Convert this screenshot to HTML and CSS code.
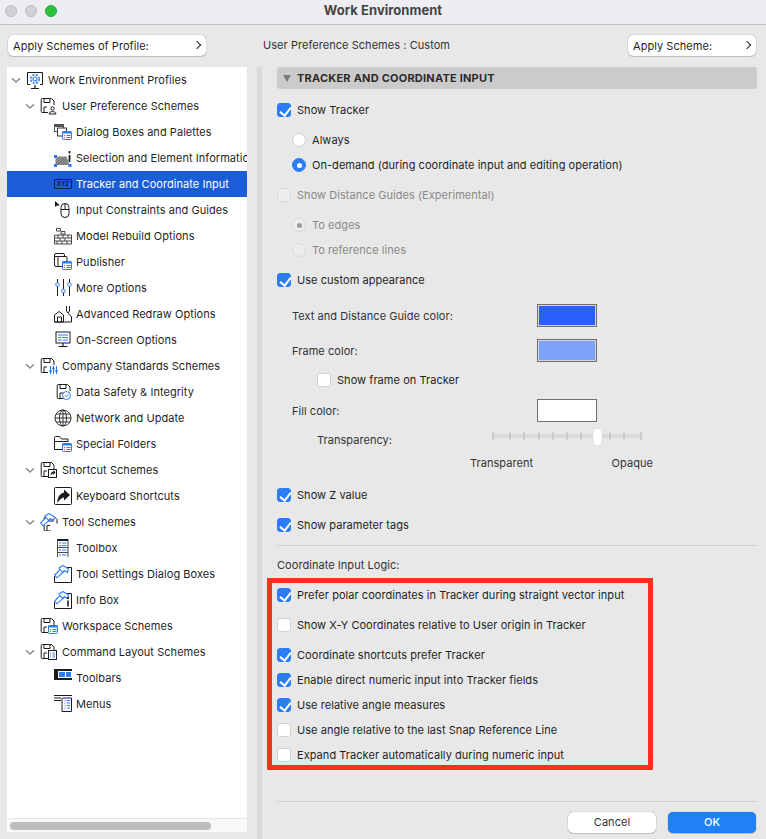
FILE: index.html
```html
<!DOCTYPE html>
<html lang="en">
<head>
    <meta charset="UTF-8">
    <meta name="viewport" content="width=device-width, initial-scale=1.0">
    <title>Work Environment</title>
    <link rel="stylesheet" href="styles.css">
</head>
<body>
    <!-- shared icon parts -->
    <svg class="defs" width="0" height="0">
        <defs>
            <symbol id="chev" viewBox="0 0 12 12"><path d="M2 4.200 6 8l4-3.800" fill="none" stroke="#8c8c8c" stroke-width="1.500"/></symbol>
            <pattern id="hatch" width="2" height="2" patternUnits="userSpaceOnUse" patternTransform="rotate(45)"><rect width="2" height="2" fill="#5c5c5c"/><rect width=".8" height="2" fill="#c4c4c4"/></pattern>
            <g id="floppy" fill="none" stroke="#1c1c1c"><path d="M8 15.500H2.200a1 1 0 0 1-1-1V2.500a1 1 0 0 1 1-1h9.300L14 4v4"/><path d="M4 1.500v4h6v-4M4 15.500V10h3"/></g>
            <g id="badge"><rect x="8.500" y="8.500" width="9" height="8" rx=".8" fill="#fff" stroke="#2f7bf5"/><rect x="8.500" y="8.500" width="9" height="2" fill="#2f7bf5"/><path d="M10 12.500h1M12.500 12.500h4M10 14.500h1M12.500 14.500h4" stroke="#2f7bf5"/></g>
            <g id="hammer" fill="#fff" stroke="#2f7bf5" stroke-width="1.100"><path d="M.7 10 7 3.500l3 3-7 6.300z"/><path d="M5 3 9 .5l5.500 3.500-1 3.500-3-2-2 2z"/></g>
        </defs>
    </svg>

    <div class="titlebar">
        <div class="lights">
            <span class="light"></span>
            <span class="light"></span>
            <span class="light green"></span>
        </div>
        <div class="title">Work Environment</div>
    </div>

    <div class="toprow">
        <div class="popup popup-left">Apply Schemes of Profile:</div>
        <div class="scheme-label">User Preference Schemes : Custom</div>
        <div class="popup popup-right">Apply Scheme:</div>
    </div>

    <div class="main">
        <div class="tree">
            <div class="tree-list">
                <div class="node lvl0"><svg class="chev"><use href="#chev"/></svg><svg class="ic" viewBox="0 0 18 18"><path d="M4 13.500H1.500v-12h15v12H14" fill="none" stroke="#1c1c1c"/><path d="M9 14v3M5 17.500h8" stroke="#1c1c1c" stroke-width="1.200"/><circle cx="9" cy="8" r="2" fill="none" stroke="#2f7bf5" stroke-width="1.200"/><circle cx="9" cy="8" r="4.300" fill="none" stroke="#2f7bf5" stroke-width="1.500" stroke-dasharray="2.200 1.200"/></svg>Work Environment Profiles</div>
                <div class="node lvl1"><svg class="chev"><use href="#chev"/></svg><svg class="ic" viewBox="0 0 18 18"><use href="#floppy"/><circle cx="12.500" cy="11.500" r="1.700" fill="none" stroke="#1c1c1c"/><path d="M9 17c0-3.200 7-3.200 7 0z" fill="none" stroke="#1c1c1c"/></svg>User Preference Schemes</div>
                <div class="node lvl2"><span class="chev"></span><svg class="ic" viewBox="0 0 18 18"><rect x=".5" y="1.500" width="9" height="7" fill="#fff" stroke="#555"/><path d="M.5 3h9" stroke="#555" stroke-width="2"/><rect x="3.500" y="5" width="9" height="8" fill="#fff" stroke="#333"/><use href="#badge"/></svg>Dialog Boxes and Palettes</div>
                <div class="node lvl2"><span class="chev"></span><svg class="ic" viewBox="0 0 18 18"><path d="M1.500 7.500h11l3 8.500h-14z" fill="url(#hatch)"/><rect y="6" width="3" height="3" fill="#2f7bf5"/><rect y="15" width="3" height="3" fill="#2f7bf5"/><rect x="14.500" y="15" width="3" height="3" fill="#2f7bf5"/><path d="M15.500 6v7M15.500 2v2.500" stroke="#1c1c1c" stroke-width="1.800"/></svg>Selection and Element Information</div>
                <div class="node lvl2 selected"><span class="chev"></span><svg class="ic" viewBox="0 0 18 18"><rect x=".5" y="4.500" width="17" height="9" rx=".5" fill="none" stroke="#14213d"/><text x="9" y="11.300" class="xyz">XYZ</text></svg>Tracker and Coordinate Input</div>
                <div class="node lvl2"><span class="chev"></span><svg class="ic" viewBox="0 0 18 18"><path d="M1 0v6l2-1.500h3z" fill="#1c1c1c"/><rect x="7" y="2.500" width="8" height="14" rx="4" fill="none" stroke="#1c1c1c"/><path d="M7 8.500h8M11 2.500v6" stroke="#1c1c1c"/></svg>Input Constraints and Guides</div>
                <div class="node lvl2"><span class="chev"></span><svg class="ic" viewBox="0 0 18 18"><path d="M2.500 1.500h4v2.500h-4zM7 4.500h4v2.500H7zM.5 8h17M.5 11h17M.5 14h17M.5 17h17M.5 8v9M17.500 8v9M4 8v3M9 8v3M14 8v3M6 11v3M11 11v3M3 14v3M8 14v3M13 14v3" fill="none" stroke="#333" stroke-width=".9"/></svg>Model Rebuild Options</div>
                <div class="node lvl2"><span class="chev"></span><svg class="ic" viewBox="0 0 18 18"><rect x=".5" y=".5" width="10" height="13" rx="1.500" fill="#fff" stroke="#1c1c1c"/><path d="M.5 3.500h10" stroke="#1c1c1c"/><rect x="4" y="3.500" width="9" height="10" rx="1" fill="#fff" stroke="#1c1c1c"/><use href="#badge"/></svg>Publisher</div>
                <div class="node lvl2"><span class="chev"></span><svg class="ic" viewBox="0 0 18 18"><path d="M3.500 0v17M9.500 0v17M15.500 0v17" stroke="#1c1c1c"/><circle cx="3.500" cy="5.500" r="1.800" fill="#fff" stroke="#2f7bf5"/><circle cx="9.500" cy="12" r="1.800" fill="#fff" stroke="#2f7bf5"/><circle cx="15.500" cy="5.500" r="1.800" fill="#fff" stroke="#2f7bf5"/></svg>More Options</div>
                <div class="node lvl2"><span class="chev"></span><svg class="ic" viewBox="0 0 18 18"><path d="M.5 17V10L5 6.500 9.500 10v7z" fill="none" stroke="#1c1c1c"/><path d="M.5 17h17v-5.500L14 8.500M3.500 17v-5h4v5" fill="none" stroke="#1c1c1c"/><path d="M12.500 1v5l1.500 2 1.500-2V1" fill="none" stroke="#1c1c1c"/></svg>Advanced Redraw Options</div>
                <div class="node lvl2"><span class="chev"></span><svg class="ic" viewBox="0 0 18 18"><rect x="2" y="1" width="14" height="11" fill="none" stroke="#1c1c1c"/><path d="M4 4h10M4 6.500h3M8 6.500h6M4 9h4M9 9h5" stroke="#2f7bf5"/><path d="M9 12v3M4.500 15.500h9" stroke="#1c1c1c" stroke-width="1.200"/></svg>On-Screen Options</div>
                <div class="node lvl1"><svg class="chev"><use href="#chev"/></svg><svg class="ic" viewBox="0 0 18 18"><use href="#floppy"/><path d="M10.500 9v8M13.500 9v8M16.500 9v8" stroke="#2f7bf5"/><circle cx="10.500" cy="14" r="1.300" fill="#2f7bf5"/><circle cx="13.500" cy="11.500" r="1.300" fill="#2f7bf5"/><circle cx="16.500" cy="14" r="1.300" fill="#2f7bf5"/></svg>Company Standards Schemes</div>
                <div class="node lvl2"><span class="chev"></span><svg class="ic" viewBox="0 0 18 18"><use href="#floppy" transform="translate(2)"/><circle cx="12.500" cy="12.500" r="4" fill="#fff" stroke="#2f7bf5"/><path d="M11 12.500l1.200 1.300 2-2.500" fill="none" stroke="#2f7bf5"/></svg>Data Safety &amp; Integrity</div>
                <div class="node lvl2"><span class="chev"></span><svg class="ic" viewBox="0 0 18 18"><g fill="none" stroke="#333"><circle cx="9" cy="9" r="8"/><ellipse cx="9" cy="9" rx="3.500" ry="8"/><path d="M9 1v16M1 9h16M2 5h14M2 13h14"/></g></svg>Network and Update</div>
                <div class="node lvl2"><span class="chev"></span><svg class="ic" viewBox="0 0 18 18"><path d="M8 14.500H.5v-12a1 1 0 0 1 1-1h4l2 2.500h6.500v3" fill="none" stroke="#1c1c1c"/><path d="M.5 6.500H14" stroke="#1c1c1c"/><use href="#badge"/></svg>Special Folders</div>
                <div class="node lvl1"><svg class="chev"><use href="#chev"/></svg><svg class="ic" viewBox="0 0 18 18"><use href="#floppy"/><rect x="8.500" y="8.500" width="8" height="8" fill="#fff" stroke="#1c1c1c"/><path d="M10.500 15c0-3 1.500-4.500 3-4.500V9l2 2.500-2 2.500v-1.500c-1 0-2 .8-3 2.500z" fill="#1c1c1c"/></svg>Shortcut Schemes</div>
                <div class="node lvl2"><span class="chev"></span><svg class="ic" viewBox="0 0 18 18"><rect x=".5" y=".5" width="17" height="17" rx="1" fill="none" stroke="#1c1c1c"/><path d="M3.500 16C3 10 6 6.500 10 5.500V2.500L16 8l-6 5.500V10.500C7.500 10.500 5 13 3.500 16z" fill="#1c1c1c"/></svg>Keyboard Shortcuts</div>
                <div class="node lvl1"><svg class="chev"><use href="#chev"/></svg><svg class="ic" viewBox="0 0 18 18"><use href="#floppy" transform="translate(3 2.500)"/><use href="#hammer"/></svg>Tool Schemes</div>
                <div class="node lvl2"><span class="chev"></span><svg class="ic" viewBox="0 0 18 18"><path d="M3.500 1h10.500" stroke="#1c1c1c" stroke-width="2"/><path d="M3.500 0v18M14 0v18M3.500 8.500h10.500M3.500 13.500h10.500" stroke="#1c1c1c" stroke-width=".8"/><path d="M5 4h2M8 4h4.500M5 6.500h2M8 6.500h4.500M5 11h2M8 11h4.500M5 16h2M8 16h4.500" stroke="#2f7bf5" stroke-width="1.200"/></svg>Toolbox</div>
                <div class="node lvl2"><span class="chev"></span><svg class="ic" viewBox="0 0 18 18"><path d="M.5 11v6.500h17V2.500H13" fill="none" stroke="#1c1c1c"/><use href="#hammer"/></svg>Tool Settings Dialog Boxes</div>
                <div class="node lvl2"><span class="chev"></span><svg class="ic" viewBox="0 0 18 18"><path d="M.5 11v6.500h17V2.500H13" fill="none" stroke="#1c1c1c"/><use href="#hammer"/><path d="M14 9.500v6M14 6v2" stroke="#1c1c1c" stroke-width="1.600"/></svg>Info Box</div>
                <div class="node lvl1"><span class="chev"></span><svg class="ic" viewBox="0 0 18 18"><use href="#floppy"/><use href="#badge"/></svg>Workspace Schemes</div>
                <div class="node lvl1"><svg class="chev"><use href="#chev"/></svg><svg class="ic" viewBox="0 0 18 18"><use href="#floppy"/><rect x="8.500" y="7.500" width="8" height="9" fill="#fff" stroke="#1c1c1c"/><path d="M10 10h1M12.500 10h2.500M10 12h1M12.500 12h2.500M10 14h1M12.500 14h2.500" stroke="#2f7bf5"/></svg>Command Layout Schemes</div>
                <div class="node lvl2"><span class="chev"></span><svg class="ic" viewBox="0 0 18 18"><rect y="0" width="18" height="11" fill="#1c1c1c"/><rect x="4" y="2" width="14" height="7" fill="#fff"/><rect x="5" y="3" width="6" height="5" fill="#2f7bf5"/><rect x="12" y="3" width="5" height="5" fill="#2f7bf5"/></svg>Toolbars</div>
                <div class="node lvl2"><span class="chev"></span><svg class="ic" viewBox="0 0 18 18"><path d="M0 .5h18M0 3h7M0 5.500h7" stroke="#1c1c1c"/><path d="M8 3v13.500h9.500V3h-9" fill="none" stroke="#1c1c1c"/><path d="M10.500 5.500h1M13 5.500h3M10.500 8h1M13 8h3M10.500 10.500h1M13 10.500h3M10.500 13h1M13 13h3" stroke="#2f7bf5"/></svg>Menus</div>
            </div>
            <div class="hscroll"><div class="hscroll-thumb"></div></div>
        </div>

        <div class="settings">
            <div class="section-head"><span class="tri"></span>TRACKER AND COORDINATE INPUT</div>

            <div class="row first"><span class="check on"></span>Show Tracker</div>
            <div class="row sub"><span class="radio"></span>Always</div>
            <div class="row sub tight"><span class="radio on"></span>On-demand (during coordinate input and editing operation)</div>

            <div class="row off"><span class="check"></span>Show Distance Guides (Experimental)</div>
            <div class="row sub off"><span class="radio dot"></span>To edges</div>
            <div class="row sub tight off"><span class="radio"></span>To reference lines</div>

            <div class="row"><span class="check on"></span>Use custom appearance</div>
            <div class="color-row text-color"><span class="color-label">Text and Distance Guide color:</span><span class="swatch blue"></span></div>
            <div class="color-row frame-color"><span class="color-label">Frame color:</span><span class="swatch light-blue"></span></div>
            <div class="row frame-check"><span class="check"></span>Show frame on Tracker</div>
            <div class="color-row fill-color"><span class="color-label">Fill color:</span><span class="swatch white"></span></div>
            <div class="slider-row">
                <span class="slider-label">Transparency:</span>
                <svg class="slider" width="152" height="20" viewBox="0 0 152 20">
                    <rect x="1" y="5" width="150" height="4" fill="#dadada"/>
                    <path d="M2 3v8M19 3v8M33 3v8M48 3v8M62 3v8M76 3v8M90 3v8M119 3v8M133 3v8M150 3v8" stroke="#bdbdbd" stroke-width="1.200"/>
                    <rect x="102" y="-.5" width="9" height="17" rx="4.500" fill="#fff" stroke="#d4d4d4" stroke-width=".5"/>
                </svg>
            </div>
            <div class="slider-ends"><span>Transparent</span><span>Opaque</span></div>

            <div class="row z-value"><span class="check on"></span>Show Z value</div>
            <div class="row"><span class="check on"></span>Show parameter tags</div>

            <div class="divider"></div>
            <div class="logic-label">Coordinate Input Logic:</div>

            <div class="highlight">
                <div class="row first-in"><span class="check on"></span>Prefer polar coordinates in Tracker during straight vector input</div>
                <div class="row"><span class="check"></span>Show X-Y Coordinates relative to User origin in Tracker</div>
                <div class="row"><span class="check on"></span>Coordinate shortcuts prefer Tracker</div>
                <div class="row tight"><span class="check on"></span>Enable direct numeric input into Tracker fields</div>
                <div class="row tight"><span class="check on"></span>Use relative angle measures</div>
                <div class="row tight"><span class="check"></span>Use angle relative to the last Snap Reference Line</div>
                <div class="row tight"><span class="check"></span>Expand Tracker automatically during numeric input</div>
            </div>

            <div class="divider bottom"></div>
            <div class="buttons">
                <div class="btn">Cancel</div>
                <div class="btn primary">OK</div>
            </div>
        </div>
    </div>
</body>
</html>
```

FILE: styles.css
```css
* {
    box-sizing: border-box;
}
html, body {
    height: 100%;
}
body {
    margin: 0;
    background: #e8e8e8;
    color: #1f1f1f;
    font-family: Inter, "Liberation Sans", sans-serif;
    font-size: 11px;
    letter-spacing: 0.05px;
    overflow: hidden;
    display: flex;
    flex-direction: column;
}
.defs {
    position: absolute;
}

/* title bar */
.titlebar {
    height: 25px;
    flex: none;
    display: grid;
    grid-template-columns: 1fr auto 1fr;
    align-items: center;
    background: #eeedf2;
    border-bottom: 1px solid #c2c2c2;
    padding-bottom: 5px;
}
.lights {
    display: flex;
    gap: 8px;
    padding-left: 5px;
    padding-top: 2px;
}
.light {
    width: 12px;
    height: 12px;
    border-radius: 50%;
    background: #d2d0d5;
    border: 1px solid #bdbbc0;
}
.light.green {
    background: #2cc23c;
    border-color: #25ad33;
}
.title {
    font-size: 13px;
    font-weight: 700;
    color: #444;
}

/* top row */
.toprow {
    height: 42px;
    flex: none;
    display: flex;
    align-items: center;
    padding: 0 10px 1px 8px;
}
.popup {
    height: 21px;
    background: #fff;
    border-radius: 5px;
    box-shadow: 0 0 1px rgba(0, 0, 0, 0.5), 0 1px 1px rgba(0, 0, 0, 0.15);
    line-height: 22px;
    padding-left: 5px;
    position: relative;
}
.popup::after {
    content: "";
    position: absolute;
    right: 6px;
    top: 7px;
    width: 5px;
    height: 5px;
    border-top: 1.5px solid #222;
    border-right: 1.5px solid #222;
    transform: rotate(45deg);
}
.popup-left {
    width: 198px;
}
.popup-right {
    width: 128px;
    margin-left: auto;
}
.scheme-label {
    margin-left: 57px;
    color: #333;
    padding-bottom: 2px;
}

.main {
    flex: 1;
    min-height: 0;
    display: flex;
    align-items: flex-start;
}

/* left tree */
.tree {
    width: 240px;
    height: 765px;
    margin-left: 7px;
    background: #fff;
    display: flex;
    flex-direction: column;
    overflow: hidden;
    flex: none;
}
.tree-list {
    flex: 1;
}
.node {
    height: 26px;
    display: flex;
    align-items: center;
    white-space: nowrap;
}
.node.lvl0 {
    padding-left: 3px;
}
.node.lvl1 {
    padding-left: 17px;
}
.node.lvl2 {
    padding-left: 31px;
}
.node.selected {
    background: #1b5cd7;
    color: #fff;
}
.chev {
    width: 12px;
    height: 12px;
    margin-right: 4px;
    flex: none;
}
.ic {
    width: 18px;
    height: 18px;
    margin-right: 4px;
    flex: none;
}
.xyz {
    font-size: 5.5px;
    font-weight: 700;
    text-anchor: middle;
    fill: #14213d;
}
.hscroll {
    height: 14px;
    flex: none;
    background: #f8f8f8;
    border-top: 1px solid #e6e6e6;
    padding: 3px 3px 0;
}
.hscroll-thumb {
    width: 201px;
    height: 8px;
    background: #bdbdbd;
    border-radius: 4px;
}

/* right side */
.settings {
    width: 505px;
    height: 772px;
    margin-left: 10px;
    padding: 0 5px 0 15px;
    border-left: 5px solid #d9d9d9;
}
.section-head {
    height: 22px;
    display: flex;
    align-items: center;
    background: #cbcbcb;
    border-radius: 3px;
    font-weight: 700;
    letter-spacing: 0.22px;
    color: #2b2b2b;
    padding-left: 6px;
}
.tri {
    width: 0;
    height: 0;
    border-left: 4px solid transparent;
    border-right: 4px solid transparent;
    border-top: 7px solid #7c7c7c;
    margin-right: 6px;
}
.row {
    height: 20px;
    margin-top: 10px;
    display: flex;
    align-items: center;
    white-space: nowrap;
}
.row.first {
    margin-top: 11px;
}
.row.tight {
    margin-top: 5px;
}
.row.sub {
    padding-left: 15px;
}
.row.off {
    color: #8a8a8a;
}
.check {
    width: 14px;
    height: 14px;
    margin-right: 6px;
    border-radius: 3px;
    background: #fff;
    border: 1px solid #d2d2d2;
    position: relative;
    flex: none;
}
.check.on {
    background: #2b7df6;
    border-color: #2b7df6;
}
.check.on::after {
    content: "";
    position: absolute;
    left: 3.5px;
    top: 0.5px;
    width: 5px;
    height: 9px;
    border-right: 2px solid #fff;
    border-bottom: 2px solid #fff;
    transform: rotate(38deg);
}
.row.off .check {
    background: #ededed;
    border-color: #d8d8d8;
}
.radio {
    width: 14px;
    height: 14px;
    margin-right: 6px;
    border-radius: 50%;
    background: #fff;
    border: 1px solid #cfcfcf;
    position: relative;
    flex: none;
}
.radio.on {
    background: #2b7df6;
    border-color: #2b7df6;
}
.radio.on::after, .radio.dot::after {
    content: "";
    position: absolute;
    left: 3.5px;
    top: 3.5px;
    width: 5px;
    height: 5px;
    border-radius: 50%;
    background: #fff;
}
.row.off .radio {
    background: #ededed;
    border-color: #d8d8d8;
}
.radio.dot::after {
    background: #9a9a9a;
}

/* color wells */
.color-row {
    height: 23px;
    display: flex;
    align-items: center;
    padding-left: 15px;
    color: #333;
}
.color-label {
    width: 245px;
}
.text-color {
    margin-top: 14px;
}
.frame-color {
    margin-top: 12px;
}
.fill-color {
    margin-top: 9px;
}
.row.frame-check {
    margin-top: 8px;
    padding-left: 40px;
}
.swatch {
    width: 60px;
    height: 23px;
    border: 1px solid #707070;
    box-shadow: inset 0 0 0 1px #d5d5d5;
}
.swatch.blue {
    background: #2b5ffb;
}
.swatch.light-blue {
    background: #7ea3fb;
}
.swatch.white {
    background: #fff;
    box-shadow: none;
}
.slider-row {
    height: 20px;
    margin-top: 8px;
    display: flex;
    align-items: center;
    padding-left: 40px;
    color: #333;
}
.slider {
    margin-left: 108px;
    margin-top: -3px;
    overflow: visible;
}
.slider-label {
    width: 66px;
}
.slider-ends {
    width: 376px;
    height: 20px;
    margin-top: 3px;
    padding-left: 193px;
    display: flex;
    justify-content: space-between;
    align-items: center;
    color: #333;
}
.row.z-value {
    margin-top: 12px;
}
.divider {
    height: 1px;
    margin-top: 10px;
    background: #d0d0d0;
}
.divider.bottom {
    margin-top: 31px;
}
.logic-label {
    height: 20px;
    margin-top: 9px;
    line-height: 20px;
    color: #333;
}
.highlight {
    width: 386px;
    height: 192px;
    margin: 3px 0 0 -10px;
    border: 5px solid #fb2f1e;
    padding-left: 5px;
}
.highlight .first-in {
    margin-top: 2px;
}

/* footer buttons */
.buttons {
    display: flex;
    justify-content: flex-end;
    gap: 12px;
    margin-top: 10px;
    padding-right: 1px;
}
.btn {
    width: 88px;
    height: 21px;
    background: #fff;
    border-radius: 5px;
    box-shadow: 0 0 1px rgba(0, 0, 0, 0.5), 0 1px 1px rgba(0, 0, 0, 0.15);
    text-align: center;
    line-height: 21px;
    color: #333;
}
.btn.primary {
    background: #2080f8;
    color: #fff;
    font-weight: 500;
}
```
